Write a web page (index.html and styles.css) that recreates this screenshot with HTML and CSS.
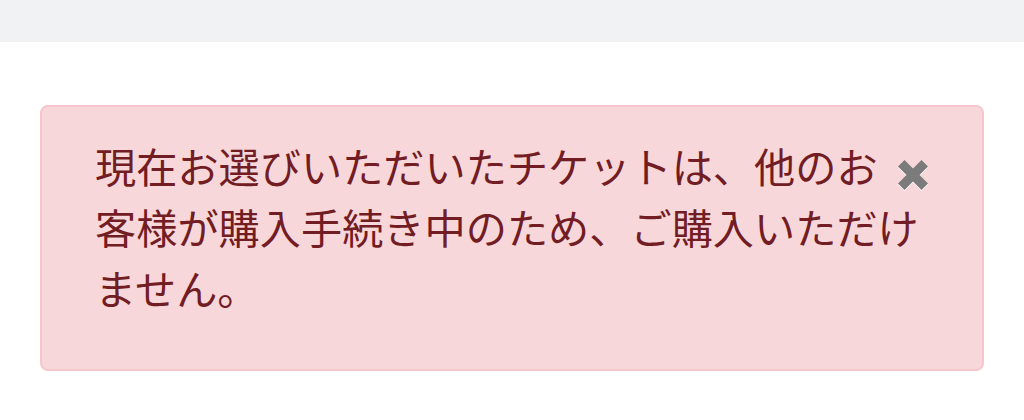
FILE: index.html
```html
<!DOCTYPE html>
<html lang="ja">
<head>
  <meta charset="UTF-8" />
  <title>チケット購入</title>
  <link rel="stylesheet" href="styles.css">
</head>
<body>

  <div class="topbar"></div>

  <main class="content">
    <div class="alert alert-danger" role="alert">
      <button type="button" class="close" aria-label="閉じる">
        <svg width="30" height="30" viewBox="0 0 30 30" aria-hidden="true">
          <path d="M6.5 0 L15 8.5 L23.5 0 L30 6.5 L21.5 15 L30 23.5 L23.5 30 L15 21.5 L6.5 30 L0 23.5 L8.5 15 L0 6.5 Z" />
        </svg>
      </button>
      現在お選びいただいたチケットは、他のお客様が購入手続き中のため、ご購入いただけません。
    </div>
  </main>

</body>
</html>
```

FILE: styles.css
```css
body {
  margin: 0;
  background: #fff;
  font-family: "Noto Sans CJK JP", "Noto Sans", sans-serif;
}

.topbar {
  height: 42px;
  background: #f1f2f4;
}

.content {
  padding: 63px 40px 0;
}

.alert {
  padding: 28px 42px 51px 53px;
  border: 2px solid #f5c6cb;
  border-radius: 8px;
  background: #f8d7da;
  color: #721c24;
  font-size: 41.2px;
  line-height: 61px;
}

.close {
  float: right;
  width: 44px;
  height: 61px;
  padding: 0 0 0 2px;
  border: none;
  background: none;
  text-align: left;
  cursor: pointer;
}

.close svg {
  display: block;
  margin-top: 19px;
  fill: #7b7b7b;
  filter: drop-shadow(0 1px 0 #fff);
}
```
